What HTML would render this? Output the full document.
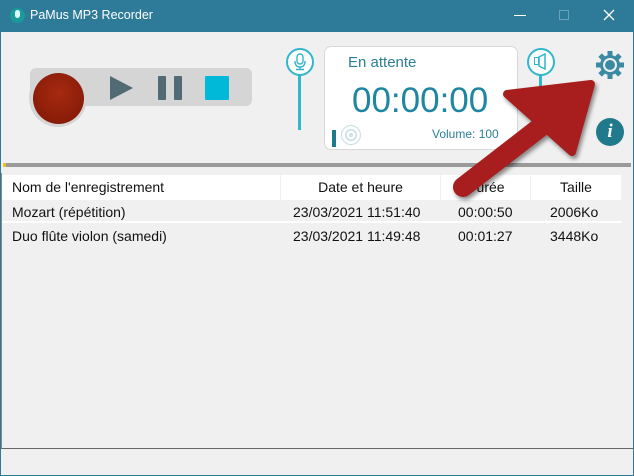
<!DOCTYPE html>
<html><head><meta charset="utf-8"><style>
*{margin:0;padding:0;box-sizing:border-box}
body{width:634px;height:476px;overflow:hidden;background:#f0f0f0;font-family:"Liberation Sans",sans-serif;position:relative}
.win{position:absolute;left:0;top:0;width:634px;height:476px;border:1px solid #2b7a99}
.title{position:absolute;left:0;top:0;width:634px;height:32px;background:#2e7b99;color:#fff;font-size:12.5px}
.abs{position:absolute}
.list{position:absolute;left:1px;top:173px;width:632px;height:276px;border-bottom:1px solid #666;border-left:1px solid #888;background:#f0f0f0}
.hdr{position:absolute;top:2px;height:25px;background:#fff;font-size:14px;color:#111;line-height:25px}
.cell{position:absolute;font-size:14px;color:#111}
</style></head><body>
<div class="win"></div>
<div class="title">
 <div class="abs" style="left:10px;top:8px;width:15px;height:15px;border-radius:50%;background:#1a9a9a"></div>
 <div class="abs" style="left:15px;top:10px;width:5px;height:8px;border-radius:3px;background:#dff"></div>
 <div class="abs" style="left:30px;top:8px">PaMus MP3 Recorder</div>
 <div class="abs" style="left:514px;top:15px;width:12px;height:1px;background:#fff"></div>
 <div class="abs" style="left:559px;top:10px;width:10px;height:10px;border:1px solid #6aa3b8"></div>
 <svg class="abs" style="left:603px;top:9px" width="12" height="12"><path d="M1 1L11 11M11 1L1 11" stroke="#fff" stroke-width="1.3"/></svg>
</div>
<!-- controls -->
<div class="abs" style="left:30px;top:68px;width:222px;height:38px;background:#d5d5d5;border-radius:6px"></div>
<div class="abs" style="left:29px;top:69px;width:58px;height:58px;border-radius:50%;background:#d5d5d5"></div>
<div class="abs" style="left:33px;top:73px;width:51px;height:51px;border-radius:50%;background:radial-gradient(circle at 50% 40%,#a62a10,#8a1c08 70%,#6e1506)"></div>
<svg class="abs" style="left:108px;top:76px" width="26" height="24"><polygon points="2,0 25,12 2,24" fill="#526a73"/></svg>
<div class="abs" style="left:158px;top:76px;width:8px;height:24px;background:#526a73;border-radius:1px"></div>
<div class="abs" style="left:174px;top:76px;width:8px;height:24px;background:#526a73;border-radius:1px"></div>
<div class="abs" style="left:205px;top:76px;width:24px;height:24px;background:#00b8d8;border-radius:1px"></div>
<!-- mic slider -->
<div class="abs" style="left:298px;top:70px;width:3px;height:60px;background:#31b6cc"></div>
<div class="abs" style="left:286px;top:48px;width:28px;height:28px;border-radius:50%;background:#fff;border:2px solid #31b6cc"></div>
<svg class="abs" style="left:290px;top:52px" width="20" height="20"><rect x="7" y="2" width="6" height="10" rx="3" fill="none" stroke="#31b6cc" stroke-width="1.4"/><path d="M5 9Q5 15 10 15Q15 15 15 9M10 15V17M6 17.5H14" fill="none" stroke="#31b6cc" stroke-width="1.4"/></svg>
<!-- display -->
<div class="abs" style="left:324px;top:46px;width:194px;height:104px;background:#fff;border:1px solid #d8d8d8;border-radius:7px"></div>
<div class="abs" style="left:348px;top:54px;font-size:15px;color:#2a7f95">En attente</div>
<div class="abs" style="left:352px;top:81px;font-size:35px;color:#1e86a0">00:00:00</div>
<div class="abs" style="left:432px;top:127px;font-size:12px;color:#2a7f95">Volume: 100</div>
<div class="abs" style="left:332px;top:130px;width:4px;height:17px;background:#1e7a8c"></div>
<div class="abs" style="left:341px;top:125px;width:20px;height:20px;border-radius:50%;border:1.5px solid #c8dde2;box-shadow:inset 0 0 0 3px #fff,inset 0 0 0 4.5px #c8dde2,inset 0 0 0 7px #fff,inset 0 0 0 8.5px #c8dde2"></div>
<!-- speaker slider -->
<div class="abs" style="left:539px;top:70px;width:3px;height:48px;background:#31b6cc"></div>
<div class="abs" style="left:527px;top:48px;width:28px;height:28px;border-radius:50%;background:#fff;border:2px solid #31b6cc"></div>
<div class="abs" style="left:534px;top:57px;width:5px;height:8px;border:1.5px solid #31b6cc"></div>
<svg class="abs" style="left:538px;top:53px" width="8" height="17"><polygon points="1,4 7,1 7,16 1,13" fill="none" stroke="#31b6cc" stroke-width="1.5"/></svg>
<!-- gear -->
<svg class="abs" style="left:595px;top:50px" width="30" height="30" viewBox="-15 -15 30 30">
<g fill="#3b8aa3"><circle r="10"/>
<g id="t"><rect x="-2.5" y="-14" width="5" height="6"/></g>
<use href="#t" transform="rotate(45)"/><use href="#t" transform="rotate(90)"/><use href="#t" transform="rotate(135)"/><use href="#t" transform="rotate(180)"/><use href="#t" transform="rotate(225)"/><use href="#t" transform="rotate(270)"/><use href="#t" transform="rotate(315)"/></g>
<circle r="7" fill="#f0f0f0"/><circle r="5" fill="#3b8aa3"/></svg>
<!-- info -->
<div class="abs" style="left:596px;top:118px;width:28px;height:28px;border-radius:50%;background:#217a8c;color:#fff;font:italic bold 19px 'Liberation Serif',serif;text-align:center;line-height:28px">i</div>
<!-- separator -->
<div class="abs" style="left:3px;top:163px;width:628px;height:4px;background:#9a9a9a"></div>
<div class="abs" style="left:3px;top:163px;width:3px;height:4px;background:#f0c020"></div>
<!-- list -->
<div class="list">
 <div class="hdr" style="left:0;width:278px;padding-left:10px">Nom de l'enregistrement</div>
 <div class="hdr" style="left:279px;width:159px;text-align:center">Date et heure</div>
 <div class="hdr" style="left:439px;width:89px;text-align:center">Durée</div>
 <div class="hdr" style="left:529px;width:90px;text-align:center">Taille</div>
 <div class="abs" style="left:0;top:48px;width:620px;height:2px;background:#fff"></div>
 <div class="cell" style="left:10px;top:31px">Mozart (répétition)</div>
 <div class="cell" style="left:291px;top:31px">23/03/2021 11:51:40</div>
 <div class="cell" style="left:456px;top:31px">00:00:50</div>
 <div class="cell" style="left:548px;top:31px">2006Ko</div>
 <div class="cell" style="left:10px;top:55px">Duo flûte violon (samedi)</div>
 <div class="cell" style="left:291px;top:55px">23/03/2021 11:49:48</div>
 <div class="cell" style="left:456px;top:55px">00:01:27</div>
 <div class="cell" style="left:548px;top:55px">3448Ko</div>
</div>
<!-- arrow -->
<svg class="abs" style="left:0;top:0" width="634" height="476">
<g fill="#a81e1e" stroke="#a81e1e" stroke-linejoin="round" stroke-linecap="round" style="filter:drop-shadow(2px 3px 2px rgba(0,0,0,.45))">
<line x1="463" y1="187" x2="565" y2="108" stroke-width="20"/>
<polygon points="507,94 591,84 572,152" stroke-width="8"/>
</g></svg>
</body></html>
